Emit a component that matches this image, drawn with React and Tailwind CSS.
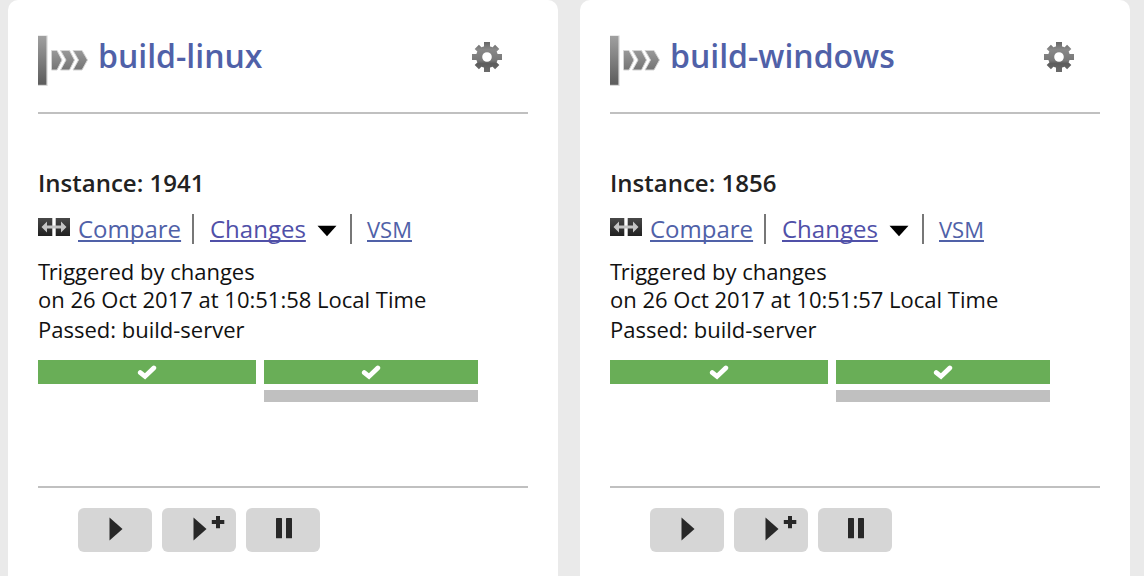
function PipelineIcon() {
  return (
    <svg width="52" height="54" viewBox="0 0 52 54" className="shrink-0">
      <defs>
        <linearGradient id="barShade" x1="0" y1="0" x2="0" y2="1">
          <stop offset="0" stopColor="#a0a0a0" />
          <stop offset="1" stopColor="#5c5c5c" />
        </linearGradient>
        <linearGradient id="chevronShade" x1="0" y1="0" x2="0" y2="1">
          <stop offset="0" stopColor="#999" />
          <stop offset="1" stopColor="#747474" />
        </linearGradient>
      </defs>
      <rect x="0" y="0.5" width="9.6" height="50.5" fill="#d8d8d8" />
      <rect x="0" y="1" width="8.4" height="48.8" fill="url(#barShade)" />
      <g fill="url(#chevronShade)" stroke="#d4d4d4" strokeWidth="1">
        <path d="M13.5 15.5H19L24 25L19 35H13.5Z" />
        <path d="M22.5 15.5H31.5L36.5 25L31.5 35H22.5L28 25Z" />
        <path d="M35 15.5H44L49.5 25L44 35H35L40.5 25Z" />
      </g>
    </svg>
  );
}

function GearIcon() {
  return (
    <svg width="32" height="32" viewBox="-16 -16 32 32">
      <defs>
        <linearGradient id="gearShade" gradientUnits="userSpaceOnUse" x1="0" y1="-15" x2="0" y2="15">
          <stop offset="0" stopColor="#666" />
          <stop offset="0.25" stopColor="#888" />
          <stop offset="0.62" stopColor="#777" />
          <stop offset="0.72" stopColor="#5c5c5c" />
          <stop offset="1" stopColor="#6c6c6c" />
        </linearGradient>
      </defs>
      <g stroke="url(#gearShade)" fill="none">
        <circle r="7.9" strokeWidth="6.2" />
        <path
          strokeWidth="6"
          d="M.01-15L0-9M.01 9L0 15M-15 .01L-9 0M9 .01L15 0M-10.2-10.2L-6.5-6.5M6.5 6.5L10.2 10.2M10.2-10.2L6.5-6.5M-6.5 6.5L-10.2 10.2"
        />
      </g>
    </svg>
  );
}

function CompareIcon() {
  return (
    <svg width="32" height="20" viewBox="0 0 32 20" className="shrink-0">
      <defs>
        <linearGradient id="compareShade" x1="0" y1="0" x2="0" y2="1">
          <stop offset="0" stopColor="#484848" />
          <stop offset="1" stopColor="#202020" />
        </linearGradient>
      </defs>
      <rect width="14.3" height="18" fill="url(#compareShade)" />
      <rect x="17.7" width="14.3" height="18" fill="url(#compareShade)" />
      <path d="M3.5 9L9 3.5V7.5H14.3V10.5H9V14.5Z" fill="#c4c4c4" />
      <path d="M28.5 9L23 3.5V7.5H17.7V10.5H23V14.5Z" fill="#c4c4c4" />
      <path d="M14.3 7.5H17.7V10.5H14.3Z" fill="#c4c4c4" />
    </svg>
  );
}

function Check() {
  return (
    <svg width="20" height="16" viewBox="0 0 20 16">
      <path d="M3.3 8.6L8 12.4L16.8 4" fill="none" stroke="#fff" strokeWidth="4.8" strokeLinecap="round" strokeLinejoin="miter" />
    </svg>
  );
}

function PlayButton({ plus }) {
  return (
    <button className="h-11 w-[74px] rounded-md bg-[#d6d6d6]">
      <svg width="74" height="44" viewBox="0 0 74 44" fill="#282828">
        <path d="M31.5 9.5L44.5 21L31.5 32.5Z" />
        {plus && <path d="M54 8H58V12H62.3V16H58V20.2H54V16H49.8V12H54Z" />}
      </svg>
    </button>
  );
}

function PauseButton() {
  return (
    <button className="h-11 w-[74px] rounded-md bg-[#d6d6d6]">
      <svg width="74" height="44" viewBox="0 0 74 44" fill="#282828">
        <rect x="30" y="10" width="6" height="20.3" rx="0.6" />
        <rect x="40" y="10" width="6" height="20.3" rx="0.6" />
      </svg>
    </button>
  );
}

function Pipeline({ name, instance, time }) {
  return (
    <section className="h-[600px] w-[550px] shrink-0 rounded-[10px] bg-white px-[30px]">
      <header className="flex h-[114px] items-start border-b-2 border-[#c0c0c0] pt-[35px]">
        <PipelineIcon />
        <h2 className="ml-2 h-11 text-[32px] leading-[42px] font-semibold text-[#5061a8]">{name}</h2>
        <button className="mt-1.5 mr-[25px] ml-auto h-8 w-8">
          <GearIcon />
        </button>
      </header>
      <div className="h-[372px] pt-[53px]">
        <div className="h-[47px] text-[24px] leading-[32px] font-semibold text-[#222]">Instance: {instance}</div>
        <div className="flex h-[30px] items-start text-[24px] leading-[30px] text-[#5061a8]">
          <div className="mt-1">
            <CompareIcon />
          </div>
          <a className="ml-2 w-[103px] underline decoration-2 underline-offset-[2px] [text-decoration-skip-ink:none]">Compare</a>
          <span className="ml-[11px] h-[30px] w-0.5 bg-[#777]" />
          <a className="ml-4 w-24 text-[#5050a8] underline decoration-2 underline-offset-[2px] [text-decoration-skip-ink:none]">Changes</a>
          <svg width="20" height="12" viewBox="0 0 20 12" className="mt-[11px] ml-[11px]">
            <path d="M.5 .8H19.5L10 11.3Z" />
          </svg>
          <span className="ml-[13px] h-[30px] w-0.5 bg-[#777]" />
          <a className="ml-[15px] text-[22px] underline decoration-2 underline-offset-[2px] [text-decoration-skip-ink:none]">VSM</a>
        </div>
        <div className="mt-[13px] text-[22px] leading-[28px] whitespace-nowrap text-[#111]">
          <p>
            <span className="tracking-[-1.5px]">T</span>riggered by changes
          </p>
          <p>on 26 Oct 2017 at {time} Local Time</p>
          <p className="mt-0.5">Passed: build-server</p>
        </div>
        <div className="mt-[17px] flex gap-2">
          <div className="flex h-6 w-[218px] items-center justify-center bg-[#69ae57]">
            <Check />
          </div>
          <div className="w-[214px]">
            <div className="flex h-6 items-center justify-center bg-[#69ae57]">
              <Check />
            </div>
            <div className="mt-1.5 h-3 bg-[#c0c0c0]" />
          </div>
        </div>
      </div>
      <footer className="flex gap-2.5 border-t-2 border-[#c0c0c0] pt-5 pl-10">
        <PlayButton />
        <PlayButton plus />
        <PauseButton />
      </footer>
    </section>
  );
}

export default function App() {
  return (
    <main className="flex h-[576px] w-[1144px] gap-[22px] overflow-hidden bg-[#eaeaea] pl-2 font-['Open_Sans','Noto_Sans',sans-serif]">
      <Pipeline name="build-linux" instance="1941" time="10:51:58" />
      <Pipeline name="build-windows" instance="1856" time="10:51:57" />
    </main>
  );
}
